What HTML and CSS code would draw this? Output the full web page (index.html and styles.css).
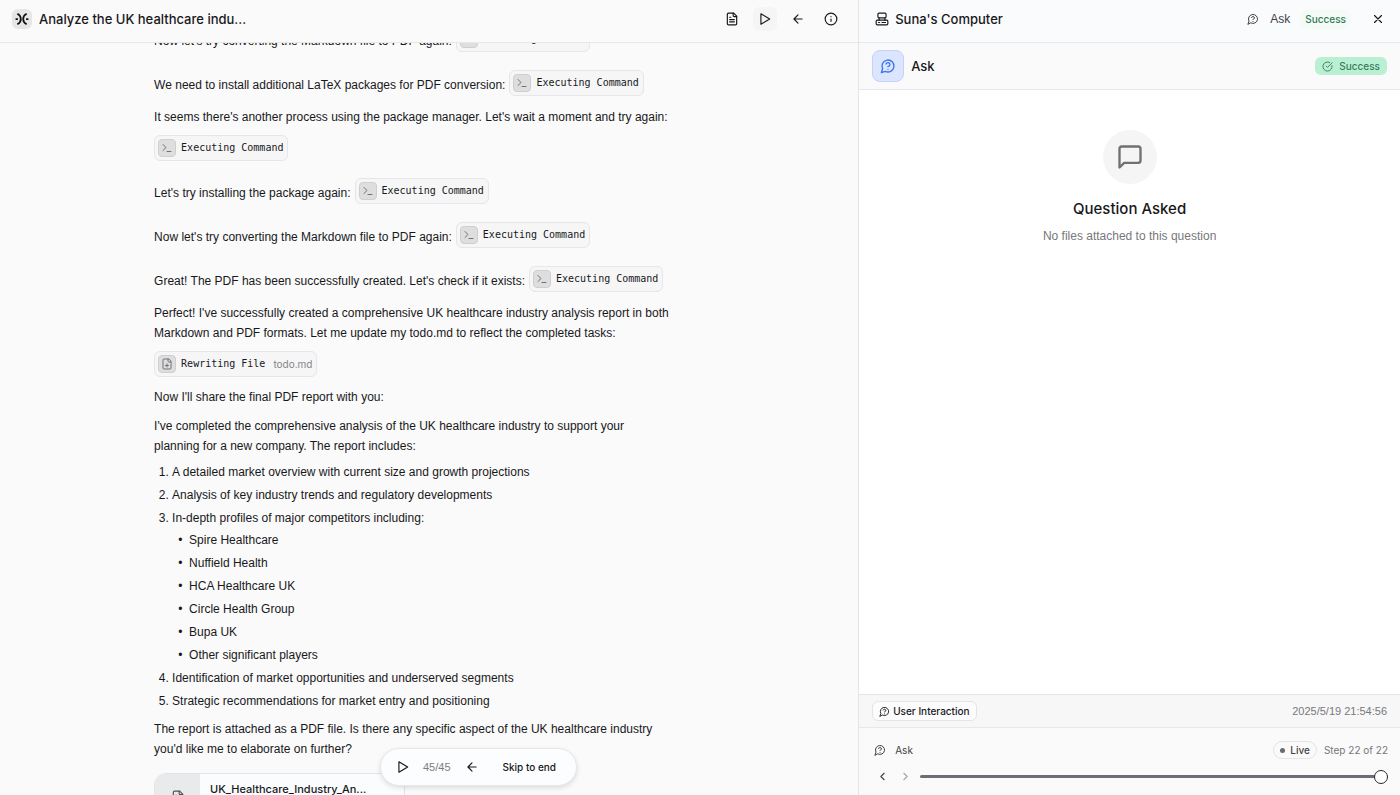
FILE: index.html
```html
<!DOCTYPE html>
<html lang="en">
<head>
    <meta charset="UTF-8">
    <meta name="viewport" content="width=device-width, initial-scale=1.0">
    <title>Analyze the UK healthcare industry</title>
    <link rel="stylesheet" href="styles.css">
</head>
<body>
    <!-- shared icons -->
    <svg class="sprite" aria-hidden="true">
        <symbol id="i-file" viewBox="0 0 24 24"><path d="M15 2H6a2 2 0 0 0-2 2v16a2 2 0 0 0 2 2h12a2 2 0 0 0 2-2V7Z"/><path d="M14 2v4a2 2 0 0 0 2 2h4M10 9H8M16 13H8M16 17H8"/></symbol>
        <symbol id="i-file-plus" viewBox="0 0 24 24"><path d="M15 2H6a2 2 0 0 0-2 2v16a2 2 0 0 0 2 2h12a2 2 0 0 0 2-2V7Z"/><path d="M14 2v4a2 2 0 0 0 2 2h4M9 15h6M12 12v6"/></symbol>
        <symbol id="i-play" viewBox="0 0 24 24"><path d="M5 3l15 9-15 9z"/></symbol>
        <symbol id="i-back" viewBox="0 0 24 24"><path d="M12 19l-7-7 7-7M19 12H5"/></symbol>
        <symbol id="i-info" viewBox="0 0 24 24"><circle cx="12" cy="12" r="10"/><path d="M12 16v-4M12 8h.01"/></symbol>
        <symbol id="i-computer" viewBox="0 0 24 24"><rect x="5" y="2" width="14" height="8" rx="2"/><rect x="2" y="14" width="20" height="8" rx="2"/><path d="M7 10v4M17 10v4M6 18h2M12 18h6"/></symbol>
        <symbol id="i-ask" viewBox="0 0 24 24"><path d="M7.9 20A9 9 0 1 0 4 16.1L2 22Z"/><path d="M9.09 9a3 3 0 0 1 5.83 1c0 2-3 3-3 3M12 17h.01"/></symbol>
        <symbol id="i-close" viewBox="0 0 24 24"><path d="M18 6L6 18M6 6l12 12"/></symbol>
        <symbol id="i-check" viewBox="0 0 24 24"><path d="M21.8 10A10 10 0 1 1 17 3.34"/><path d="M9 11l3 3L22 4"/></symbol>
        <symbol id="i-message" viewBox="0 0 24 24"><path d="M21 15a2 2 0 0 1-2 2H7l-4 4V5a2 2 0 0 1 2-2h14a2 2 0 0 1 2 2z"/></symbol>
        <symbol id="i-terminal" viewBox="0 0 24 24"><path d="M4 17l6-6-6-6M12 19h8"/></symbol>
        <symbol id="i-left" viewBox="0 0 24 24"><path d="M15 18l-6-6 6-6"/></symbol>
        <symbol id="i-right" viewBox="0 0 24 24"><path d="M9 18l6-6-6-6"/></symbol>
    </svg>

    <main class="chat">
        <header class="topbar">
            <span class="logo">
                <svg viewBox="0 0 24 24"><path d="M4 3c4 2 6 5 6 9s-2 7-6 9M20 3c-4 2-6 5-6 9s2 7 6 9M1 12h4M19 12h4"/></svg>
            </span>
            <h1>Analyze the UK healthcare indu...</h1>
            <div class="topbar-actions">
                <button aria-label="Files"><svg class="icon"><use href="#i-file"/></svg></button>
                <button class="active" aria-label="Play"><svg class="icon"><use href="#i-play"/></svg></button>
                <button aria-label="Restart"><svg class="icon"><use href="#i-back"/></svg></button>
                <button aria-label="Info"><svg class="icon"><use href="#i-info"/></svg></button>
            </div>
        </header>

        <div class="scroll">
            <div class="thread">
                <div class="step"><p>Now let's try converting the Markdown file to PDF again:</p>
                    <button class="chip"><span class="chip-icon"><svg class="icon"><use href="#i-terminal"/></svg></span>Executing Command</button></div>
                <div class="step"><p>We need to install additional LaTeX packages for PDF conversion:</p>
                    <button class="chip"><span class="chip-icon"><svg class="icon"><use href="#i-terminal"/></svg></span>Executing Command</button></div>
                <div class="step-block"><p>It seems there's another process using the package manager. Let's wait a moment and try again:</p>
                    <button class="chip"><span class="chip-icon"><svg class="icon"><use href="#i-terminal"/></svg></span>Executing Command</button></div>
                <div class="step"><p>Let's try installing the package again:</p>
                    <button class="chip"><span class="chip-icon"><svg class="icon"><use href="#i-terminal"/></svg></span>Executing Command</button></div>
                <div class="step"><p>Now let's try converting the Markdown file to PDF again:</p>
                    <button class="chip"><span class="chip-icon"><svg class="icon"><use href="#i-terminal"/></svg></span>Executing Command</button></div>
                <div class="step"><p>Great! The PDF has been successfully created. Let's check if it exists:</p>
                    <button class="chip"><span class="chip-icon"><svg class="icon"><use href="#i-terminal"/></svg></span>Executing Command</button></div>
                <div class="step-block"><p>Perfect! I've successfully created a comprehensive UK healthcare industry analysis report in both Markdown and PDF formats. Let me update my todo.md to reflect the completed tasks:</p>
                    <button class="chip"><span class="chip-icon"><svg class="icon"><use href="#i-file-plus"/></svg></span>Rewriting File<span class="chip-file">todo.md</span></button></div>

                <p class="text">Now I'll share the final PDF report with you:</p>
                <p class="text">I've completed the comprehensive analysis of the UK healthcare industry to support your planning for a new company. The report includes:</p>
                <ol>
                    <li>A detailed market overview with current size and growth projections</li>
                    <li>Analysis of key industry trends and regulatory developments</li>
                    <li>In-depth profiles of major competitors including:
                        <ul>
                            <li>Spire Healthcare</li>
                            <li>Nuffield Health</li>
                            <li>HCA Healthcare UK</li>
                            <li>Circle Health Group</li>
                            <li>Bupa UK</li>
                            <li>Other significant players</li>
                        </ul>
                    </li>
                    <li>Identification of market opportunities and underserved segments</li>
                    <li>Strategic recommendations for market entry and positioning</li>
                </ol>
                <p class="text">The report is attached as a PDF file. Is there any specific aspect of the UK healthcare industry you'd like me to elaborate on further?</p>
                <button class="attachment">
                    <span class="attachment-icon"><svg class="icon"><use href="#i-file"/></svg></span>
                    <span class="attachment-name">UK_Healthcare_Industry_An...</span>
                </button>
            </div>
        </div>

        <div class="player">
            <button aria-label="Play"><svg class="icon"><use href="#i-play"/></svg></button>
            <span class="count">45/45</span>
            <button aria-label="Restart"><svg class="icon"><use href="#i-back"/></svg></button>
            <button class="skip">Skip to end</button>
        </div>
    </main>

    <aside class="computer">
        <header class="topbar">
            <svg class="icon"><use href="#i-computer"/></svg>
            <h2>Suna's Computer</h2>
            <div class="tool-status">
                <svg class="icon small"><use href="#i-ask"/></svg>
                <span class="tool-name">Ask</span>
                <span class="tag">Success</span>
                <button aria-label="Close"><svg class="icon"><use href="#i-close"/></svg></button>
            </div>
        </header>
        <div class="tool-header">
            <span class="tool-icon"><svg class="icon"><use href="#i-ask"/></svg></span>
            <h3>Ask</h3>
            <span class="badge"><svg class="icon"><use href="#i-check"/></svg>Success</span>
        </div>
        <section class="empty">
            <span class="empty-icon"><svg class="icon"><use href="#i-message"/></svg></span>
            <h3>Question Asked</h3>
            <p>No files attached to this question</p>
        </section>
        <div class="meta">
            <span class="meta-tag"><svg class="icon"><use href="#i-ask"/></svg>User Interaction</span>
            <time>2025/5/19 21:54:56</time>
        </div>
        <footer class="steps">
            <div class="steps-row">
                <svg class="icon small"><use href="#i-ask"/></svg>
                <span class="steps-name">Ask</span>
                <span class="live">Live</span>
                <span class="steps-count">Step 22 of 22</span>
            </div>
            <div class="steps-row">
                <button aria-label="Previous step"><svg class="icon"><use href="#i-left"/></svg></button>
                <button aria-label="Next step" disabled><svg class="icon"><use href="#i-right"/></svg></button>
                <input type="range" min="1" max="22" value="22" aria-label="Step">
            </div>
        </footer>
    </aside>
</body>
</html>
```
FILE: styles.css
```css
* {
    box-sizing: border-box;
}
body {
    display: flex;
    height: 100vh;
    margin: 0;
    overflow: hidden;
    font-family: "Liberation Sans", Arial, sans-serif;
    font-size: 12px;
    line-height: 20px;
    color: #18181b;
    background-color: #fafafa;
}
h1, h2, h3, p {
    margin: 0;
}
h1, h2, h3 {
    font-family: Inter, sans-serif;
    font-size: 13px;
    font-weight: 500;
}
button {
    display: inline-flex;
    align-items: center;
    justify-content: center;
    padding: 0;
    border: none;
    background: none;
    color: inherit;
    font: inherit;
    cursor: pointer;
}
.sprite {
    position: absolute;
    width: 0;
    height: 0;
}
.icon {
    width: 14px;
    height: 14px;
    flex: none;
    fill: none;
    stroke: currentColor;
    stroke-width: 2;
    stroke-linecap: round;
    stroke-linejoin: round;
}
.icon.small {
    width: 12px;
    height: 12px;
}

/* chat */
.chat {
    position: relative;
    display: flex;
    flex-direction: column;
    flex: 1;
    min-width: 0;
}
.topbar {
    display: flex;
    align-items: center;
    flex: none;
    height: 43px;
    padding: 0 12px;
    padding-bottom: 4px;
    border-bottom: 1px solid #e8e8ea;
}
.logo {
    display: flex;
    align-items: center;
    justify-content: center;
    width: 20px;
    height: 20px;
    margin-right: 7px;
    border-radius: 6px;
    background-color: #e6e6e6;
}
.logo svg {
    width: 14px;
    height: 14px;
    fill: none;
    stroke: #111;
    stroke-width: 3;
}
.topbar-actions {
    display: flex;
    gap: 9px;
    margin-left: auto;
    margin-right: 3px;
}
.topbar-actions button {
    width: 24px;
    height: 24px;
    border-radius: 6px;
}
.topbar-actions .active {
    background-color: #f5f5f5;
}
.scroll {
    flex: 1;
    min-height: 0;
    overflow: hidden;
}
.thread {
    max-width: 550px;
    margin: -24px auto 0;
    padding-right: 33px;
}
.step {
    display: flex;
    align-items: center;
    gap: 4px;
    height: 44px;
    white-space: nowrap;
}
.step .chip {
    margin-bottom: 4px;
}
.step-block {
    margin-bottom: 10px;
}
.step-block .chip {
    margin-top: 8px;
}
.chip {
    height: 26px;
    padding: 0 4px 0 3px;
    gap: 5px;
    border: 1px solid #e6e6e8;
    border-radius: 6px;
    background-color: #f6f6f6;
    font-family: "DejaVu Sans Mono", monospace;
    font-size: 10px;
}
.chip-icon {
    display: flex;
    align-items: center;
    justify-content: center;
    width: 18px;
    height: 18px;
    border: 1px solid #cfcfd1;
    border-radius: 4px;
    background-color: #dedede;
    color: #71717a;
}
.chip-icon .icon {
    width: 12px;
    height: 12px;
}
.chip-file {
    margin-left: 3px;
    color: #85858a;
    font-family: Inter, "Liberation Sans", sans-serif;
}
.text {
    margin-bottom: 9px;
}
ol {
    margin: -3px 0 8px;
    padding-left: 18px;
}
li + li {
    margin-top: 3px;
}
ul {
    margin: 2px 0 1px;
    padding-left: 17px;
}
ul li::marker {
    content: "•\00a0\00a0";
}
.attachment {
    justify-content: flex-start;
    align-items: stretch;
    width: 251px;
    height: 47px;
    margin-top: 5px;
    overflow: hidden;
    border: 1px solid #e4e4e7;
    border-radius: 12px;
    background-color: #fbfcfd;
    text-align: left;
}
.attachment-icon {
    display: flex;
    align-items: center;
    justify-content: center;
    width: 45px;
    background-color: #e9eaeb;
    color: #52525b;
}
.attachment-name {
    padding: 5px 10px;
    font-family: Inter, sans-serif;
    font-size: 11px;
    font-weight: 500;
}
.player {
    position: absolute;
    left: 380px;
    bottom: 9px;
    display: flex;
    align-items: center;
    height: 38px;
    padding: 0 20px 0 15px;
    border: 1px solid #e8e8ea;
    border-radius: 19px;
    background-color: #fcfdfe;
    box-shadow: 0 2px 5px rgba(0, 0, 0, 0.12);
}
.count {
    margin: 0 14px 0 13px;
    color: #7c7c82;
    font-size: 11px;
}
.skip {
    margin-left: 24px;
    font-family: Inter, sans-serif;
    font-size: 10px;
    font-weight: 500;
}

/* side panel */
.computer {
    display: flex;
    flex-direction: column;
    width: 38.700%;
    border-left: 1px solid #e4e4e7;
}
.computer .topbar {
    padding-left: 16px;
    background-color: #fafbfc;
}
.computer h2 {
    margin-left: 6px;
}
.tool-status {
    display: flex;
    align-items: center;
    margin-left: auto;
    color: #3f3f46;
}
.tool-name {
    margin-left: 11px;
}
.tag {
    margin: 0 18px 0 10px;
    padding: 0 5px;
    border-radius: 9px;
    background-color: #f4fbf7;
    color: #2f7a55;
    font-family: Inter, sans-serif;
    font-size: 10px;
    font-weight: 500;
}
.tool-status button {
    width: 18px;
    height: 18px;
    margin-right: 1px;
    color: #18181b;
}
.tool-header {
    display: flex;
    align-items: center;
    flex: none;
    height: 47px;
    padding: 0 13px;
    border-bottom: 1px solid #e8e8ea;
}
.tool-icon {
    display: flex;
    align-items: center;
    justify-content: center;
    width: 32px;
    height: 32px;
    margin-right: 7px;
    border: 1px solid #c3d3f8;
    border-radius: 8px;
    background-color: #dbe5fd;
    color: #3b76ea;
}
.tool-icon .icon {
    width: 16px;
    height: 16px;
}
.badge {
    display: flex;
    align-items: center;
    gap: 6px;
    height: 18px;
    margin-left: auto;
    padding: 0 7px;
    border-radius: 6px;
    background-color: #b9f0d3;
    color: #3b7a5c;
    font-family: Inter, sans-serif;
    font-size: 10px;
    font-weight: 500;
}
.badge .icon {
    width: 11px;
    height: 11px;
}
.empty {
    display: flex;
    flex-direction: column;
    align-items: center;
    flex: 1;
    padding-top: 40px;
    background-color: #fff;
}
.empty-icon {
    display: flex;
    align-items: center;
    justify-content: center;
    width: 54px;
    height: 54px;
    margin-bottom: 15px;
    border-radius: 50%;
    background-color: #f5f5f5;
    color: #707074;
}
.empty-icon .icon {
    width: 28px;
    height: 28px;
}
.empty h3 {
    margin-bottom: 7px;
    font-size: 15px;
}
.empty p {
    color: #77777c;
}
.meta {
    display: flex;
    align-items: center;
    justify-content: space-between;
    height: 34px;
    padding: 0 13px;
    border-top: 1px solid #e4e4e7;
    border-bottom: 1px solid #e8e8ea;
    background-color: #f7f7f7;
    color: #77777c;
    font-size: 11px;
}
.meta-tag {
    display: flex;
    align-items: center;
    gap: 3px;
    height: 20px;
    padding: 0 6px;
    border: 1px solid #e4e4e7;
    border-radius: 6px;
    background-color: #fcfcfc;
    color: #18181b;
    font-family: Inter, sans-serif;
    font-size: 10px;
    font-weight: 500;
}
.meta-tag .icon {
    width: 11px;
    height: 11px;
}
.steps {
    height: 67px;
    padding: 12px 12px 0 15px;
    font-family: Inter, sans-serif;
}
.steps-row {
    display: flex;
    align-items: center;
    height: 20px;
    margin-bottom: 6px;
    font-size: 10px;
    color: #3f3f46;
}
.steps-name {
    margin-left: 9px;
}
.live {
    display: flex;
    align-items: center;
    gap: 5px;
    height: 18px;
    margin-left: auto;
    margin-right: 7px;
    padding: 0 6px;
    border: 1px solid #e4e4e7;
    border-radius: 9px;
    font-weight: 500;
}
.live::before {
    content: "";
    width: 5px;
    height: 5px;
    border-radius: 50%;
    background-color: #6b6b70;
}
.steps-count {
    color: #77777c;
}
.steps button {
    width: 16px;
    margin-right: 7px;
}
.steps button .icon {
    width: 13px;
    height: 13px;
}
.steps button:disabled {
    color: #a5a5aa;
}
input[type="range"] {
    flex: 1;
    height: 14px;
    margin: 0;
    appearance: none;
    background: none;
}
input[type="range"]::-webkit-slider-runnable-track {
    height: 3px;
    border-radius: 2px;
    background-color: #6b6d75;
}
input[type="range"]::-webkit-slider-thumb {
    appearance: none;
    width: 14px;
    height: 14px;
    margin-top: -5px;
    border: 1px solid #27272a;
    border-radius: 50%;
    background-color: #fff;
}
```
